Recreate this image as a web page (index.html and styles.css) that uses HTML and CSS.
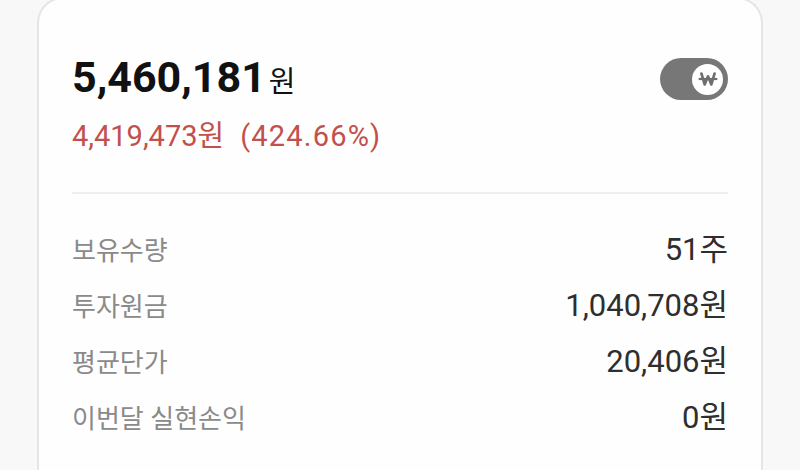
FILE: index.html
```html
<!DOCTYPE html>
<html lang="ko">
<head>
  <meta charset="UTF-8" />
  <title>보유 종목</title>
  <link rel="stylesheet" href="styles.css">
</head>
<body>

  <div class="tarjeta">
    <div class="cabecera">
      <div class="totales">
        <div class="total">5,460,181<span class="unidad">원</span></div>
        <div class="ganancia">4,419,473원<span class="porcentaje">(424.66%)</span></div>
      </div>
      <div class="interruptor">
        <div class="perilla">
          <svg width="22" height="22" viewBox="0 0 20 20">
            <path d="M4 5 L7 15 L10 7.5 L13 15 L16 5" fill="none" stroke="#6f6f6f" stroke-width="2.4" stroke-linejoin="round" stroke-linecap="round"/>
            <path d="M1.5 10 H18.5" stroke="#6f6f6f" stroke-width="2"/>
          </svg>
        </div>
      </div>
    </div>

    <div class="separador"></div>

    <div class="filas">
      <div class="fila"><span class="etiqueta">보유수량</span><span class="valor">51주</span></div>
      <div class="fila"><span class="etiqueta">투자원금</span><span class="valor">1,040,708원</span></div>
      <div class="fila"><span class="etiqueta">평균단가</span><span class="valor">20,406원</span></div>
      <div class="fila"><span class="etiqueta">이번달 실현손익</span><span class="valor">0원</span></div>
    </div>
  </div>

</body>
</html>
```

FILE: styles.css
```css
* { box-sizing: border-box; margin: 0; padding: 0; }

html, body {
  height: 100%;
}

body {
  background: #f8f8f8;
  font-family: Roboto, "Noto Sans CJK KR", sans-serif;
  overflow: hidden;
}

.tarjeta {
  margin: -3px 37px 0 37px;
  height: 490px;
  background: #fefefe;
  border: 2px solid #e5e5e5;
  border-bottom: none;
  border-radius: 26px 26px 0 0;
  padding: 0 33px;
}

.cabecera {
  display: flex;
  justify-content: space-between;
  align-items: flex-start;
  padding-top: 53px;
}

.total {
  font-size: 43px;
  font-weight: bold;
  color: #111;
  line-height: 50px;
  height: 50px;
}

.unidad {
  font-size: 29px;
  font-weight: normal;
  margin-left: 3px;
}

.ganancia {
  margin-top: 16px;
  font-size: 29px;
  line-height: 36px;
  color: #c2504c;
}

.porcentaje {
  margin-left: 16px;
  letter-spacing: 1.2px;
}

.interruptor {
  margin-top: 6px;
  width: 68px;
  height: 42px;
  border-radius: 21px;
  background: #777;
  display: flex;
  justify-content: flex-end;
  align-items: center;
  padding-right: 5px;
}

.perilla {
  width: 31px;
  height: 31px;
  border-radius: 50%;
  background: #fff;
  display: flex;
  justify-content: center;
  align-items: center;
}

.separador {
  height: 2px;
  background: #eeeeee;
  margin-top: 38px;
}

.filas {
  padding-top: 28px;
}

.fila {
  display: flex;
  justify-content: space-between;
  align-items: baseline;
  height: 56px;
  line-height: 56px;
}

.etiqueta {
  font-size: 26px;
  color: #8a8a8a;
}

.valor {
  font-size: 31px;
  color: #2e2e2e;
}
```
